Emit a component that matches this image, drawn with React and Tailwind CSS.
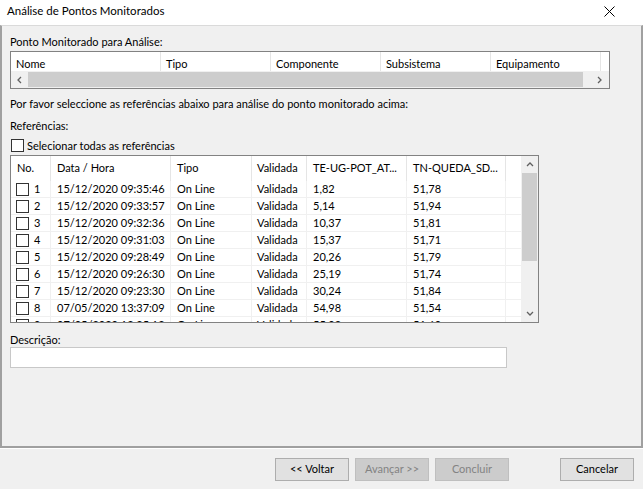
import { useState } from 'react'

const ROWS = [
  ['1', '15/12/2020 09:35:46', '1,82', '51,78'],
  ['2', '15/12/2020 09:33:57', '5,14', '51,94'],
  ['3', '15/12/2020 09:32:36', '10,37', '51,81'],
  ['4', '15/12/2020 09:31:03', '15,37', '51,71'],
  ['5', '15/12/2020 09:28:49', '20,26', '51,79'],
  ['6', '15/12/2020 09:26:30', '25,19', '51,74'],
  ['7', '15/12/2020 09:23:30', '30,24', '51,84'],
  ['8', '07/05/2020 13:37:09', '54,98', '51,54'],
  ['9', '07/05/2020 13:35:12', '55,02', '51,60'],
]

// column widths for the references table
const COLS = ['w-[40px]', 'w-[120px]', 'w-[81px]', 'w-[55px]', 'w-[100px]', 'w-[99px]']

function Check({ checked, onChange }) {
  return (
    <span
      onClick={onChange}
      className="inline-flex items-center justify-center w-[13px] h-[13px] border border-[#333] bg-white shrink-0"
    >
      {checked && (
        <svg width="9" height="9" viewBox="0 0 9 9">
          <path d="M1 4.5 L3.5 7 L8 1.5" stroke="#333" strokeWidth="1.4" fill="none" />
        </svg>
      )}
    </span>
  )
}

function Arrow({ dir }) {
  const d = {
    left: 'M5 1 L2 4 L5 7',
    right: 'M2 1 L5 4 L2 7',
    up: 'M1 5 L4 2 L7 5',
    down: 'M1 2 L4 5 L7 2',
  }[dir]
  return (
    <svg width="8" height="8" viewBox="0 0 8 8">
      <path d={d} stroke="#606060" strokeWidth="1.3" fill="none" />
    </svg>
  )
}

function Button({ children, disabled, className = '' }) {
  return (
    <div
      className={`h-[23px] w-[74px] flex items-center justify-center border ${
        disabled ? 'bg-[#cccccc] border-[#bfbfbf] text-[#838383]' : 'bg-[#e1e1e1] border-[#adadad] text-black'
      } ${className}`}
    >
      {children}
    </div>
  )
}

export default function App() {
  const [all, setAll] = useState(false)
  const [sel, setSel] = useState({})

  return (
    <div className="w-[643px] h-[489px] bg-[#f0f0f0] flex flex-col overflow-hidden font-['Lato',sans-serif] text-[11px] text-black">
      {/* Title bar */}
      <div className="h-[25px] bg-white flex items-center justify-between pl-[7px] pr-[28px] pb-[3px] shrink-0">
        <span className="leading-[16px] text-[11.5px]">Análise de Pontos Monitorados</span>
        <svg width="11" height="11" viewBox="0 0 11 11">
          <path d="M0.5 0.5 L10.5 10.5 M10.5 0.5 L0.5 10.5" stroke="#000" strokeWidth="1" />
        </svg>
      </div>

      {/* Wizard page */}
      <div className="h-[423px] shrink-0 border-t border-t-[#dadada] border-l-2 border-r-2 border-b-2 border-[#a0a0a0] pl-[8px] flex flex-col">
        <div className="mt-[8px] leading-[16px]">Ponto Monitorado para Análise:</div>

        {/* monitored point list */}
        <div className="mt-[1px] w-[600px] h-[38px] border border-[#828282] bg-white flex flex-col">
          <div className="h-[19px] overflow-hidden">
            <div className="h-[25px] flex">
              {['Nome', 'Tipo', 'Componente', 'Subsistema', 'Equipamento'].map((h, i) => (
                <div
                  key={h}
                  className={`${i === 0 ? 'w-[150px]' : 'w-[110px]'} h-full flex items-center pl-[5px] border-r border-[#e5e5e5] whitespace-nowrap`}
                >
                  {h}
                </div>
              ))}
            </div>
          </div>
          <div className="h-[17px] bg-[#f0f0f0] flex items-center">
            <div className="w-[17px] flex items-center justify-center"><Arrow dir="left" /></div>
            <div className="w-[555px] h-[15px] bg-[#cdcdcd]" />
            <div className="flex-1 flex items-center justify-end pr-[5px]"><Arrow dir="right" /></div>
          </div>
        </div>

        <div className="mt-[7px] leading-[16px]">
          Por favor seleccione as referências abaixo para análise do ponto monitorado acima:
        </div>
        <div className="mt-[6px] leading-[16px]">Referências:</div>

        <div className="mt-[4px] h-[15px] flex items-center gap-[3px] pl-[1px]">
          <Check checked={all} onChange={() => setAll(!all)} />
          <span className="leading-[15px]">Selecionar todas as referências</span>
        </div>

        {/* references table */}
        <div className="mt-[2px] w-[529px] h-[168px] border border-[#828282] bg-white flex">
          <div className="flex-1 flex flex-col overflow-hidden">
            <div className="h-[25px] flex shrink-0">
              {['No.', 'Data / Hora', 'Tipo', 'Validada', 'TE-UG-POT_AT...', 'TN-QUEDA_SD...'].map((h, i) => (
                <div
                  key={h}
                  className={`${COLS[i]} shrink-0 h-full flex items-center ${i === 3 ? 'pl-[5px]' : 'pl-[6px]'} border-r border-[#e5e5e5] whitespace-nowrap overflow-hidden`}
                >
                  {h}
                </div>
              ))}
            </div>
            <div className="flex-1 overflow-hidden">
              {ROWS.map(r => (
                <div key={r[0]} className="h-[17px] flex border-b border-[#f0f0f0] whitespace-nowrap">
                  <div className={`${COLS[0]} shrink-0 flex items-center gap-[5px] pl-[5px] border-r border-[#f0f0f0]`}>
                    <Check checked={all || !!sel[r[0]]} onChange={() => setSel({ ...sel, [r[0]]: !sel[r[0]] })} />
                    <span>{r[0]}</span>
                  </div>
                  <div className={`${COLS[1]} shrink-0 flex items-center pl-[6px] border-r border-[#f0f0f0]`}>{r[1]}</div>
                  <div className={`${COLS[2]} shrink-0 flex items-center pl-[6px] border-r border-[#f0f0f0]`}>On Line</div>
                  <div className={`${COLS[3]} shrink-0 flex items-center pl-[5px] border-r border-[#f0f0f0]`}>Validada</div>
                  <div className={`${COLS[4]} shrink-0 flex items-center pl-[6px] border-r border-[#f0f0f0]`}>{r[2]}</div>
                  <div className={`${COLS[5]} shrink-0 flex items-center pl-[6px] border-r border-[#f0f0f0]`}>{r[3]}</div>
                </div>
              ))}
            </div>
          </div>
          <div className="w-[17px] bg-[#f0f0f0] flex flex-col items-center">
            <div className="h-[17px] flex items-center justify-center"><Arrow dir="up" /></div>
            <div className="w-[15px] h-[88px] bg-[#cdcdcd]" />
            <div className="flex-1" />
            <div className="h-[17px] flex items-center justify-center"><Arrow dir="down" /></div>
          </div>
        </div>

        <div className="mt-[10px] leading-[14px]">Descrição:</div>
        <div className="w-[497px] h-[21px] border border-[#c8c8c8] bg-white" />
      </div>
      <div className="h-[1px] bg-white shrink-0" />

      {/* buttons */}
      <div className="flex pt-[9px] pl-[275px] pr-[9px]">
        <Button>&lt;&lt; Voltar</Button>
        <Button disabled className="ml-[6px]">Avançar &gt;&gt;</Button>
        <Button disabled className="ml-[6px]">Concluir</Button>
        <Button className="ml-auto">Cancelar</Button>
      </div>
    </div>
  )
}
